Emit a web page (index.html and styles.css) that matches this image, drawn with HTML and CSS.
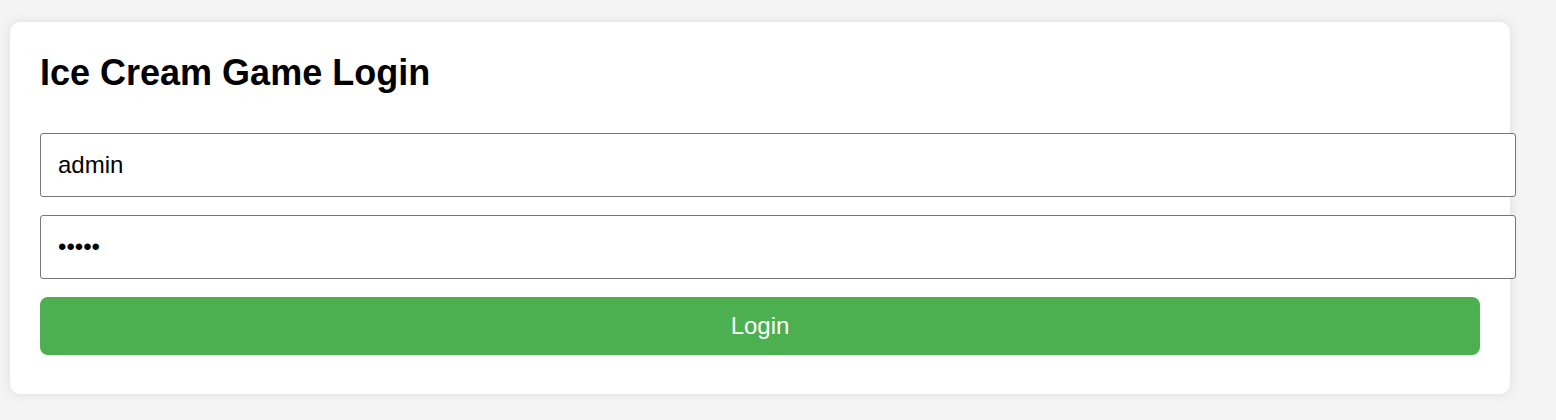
FILE: index.html
```html
<!DOCTYPE html>
<html lang="en">
<head>
    <meta charset="UTF-8">
    <meta name="viewport" content="width=device-width, initial-scale=1.0">
    <title>Ice Cream Game Login</title>
    <link rel="stylesheet" href="styles.css">
</head>
<body>
    <div class="container">
        <h1>Ice Cream Game Login</h1>
        <form id="login-form" class="login-form">
            <input type="text" class="inputs" placeholder="Username" value="admin">
            <input type="password" class="inputs" placeholder="Password" value="admin">
            <button type="submit">Login</button>
        </form>
    </div>
</body>
</html>
```

FILE: styles.css
```css
*{
    margin: 0px;
    padding: 0px;
}
body{
    font-family: "Liberation Sans", Arial, sans-serif;
    background-color: #f4f4f4;
    padding: 22px 10px;
}
.container{
    width: 1440px;
    padding: 30px 30px 38px;
    background-color: #fff;
    border-radius: 10px;
    box-shadow: 0 0 10px rgba(0, 0, 0, 0.1);
}
h1{
    font-size: 36px;
    font-weight: bold;
    color: #000;
    margin-bottom: 39px;
}
.login-form{
    display: flex;
    flex-direction: column;
    gap: 18px;
}
.inputs{
    width: 100%;
    padding: 17px;
    font-family: inherit;
    font-size: 24px;
    color: #000;
    border: 1px solid #767676;
    border-radius: 3px;
    background-color: #fff;
}
button{
    padding: 15px;
    margin-bottom: 1px;
    font-family: inherit;
    font-size: 24px;
    color: #fff;
    border: none;
    border-radius: 8px;
    background-color: #4caf50;
    cursor: pointer;
}
button:hover{
    background-color: #45a049;
}
```
